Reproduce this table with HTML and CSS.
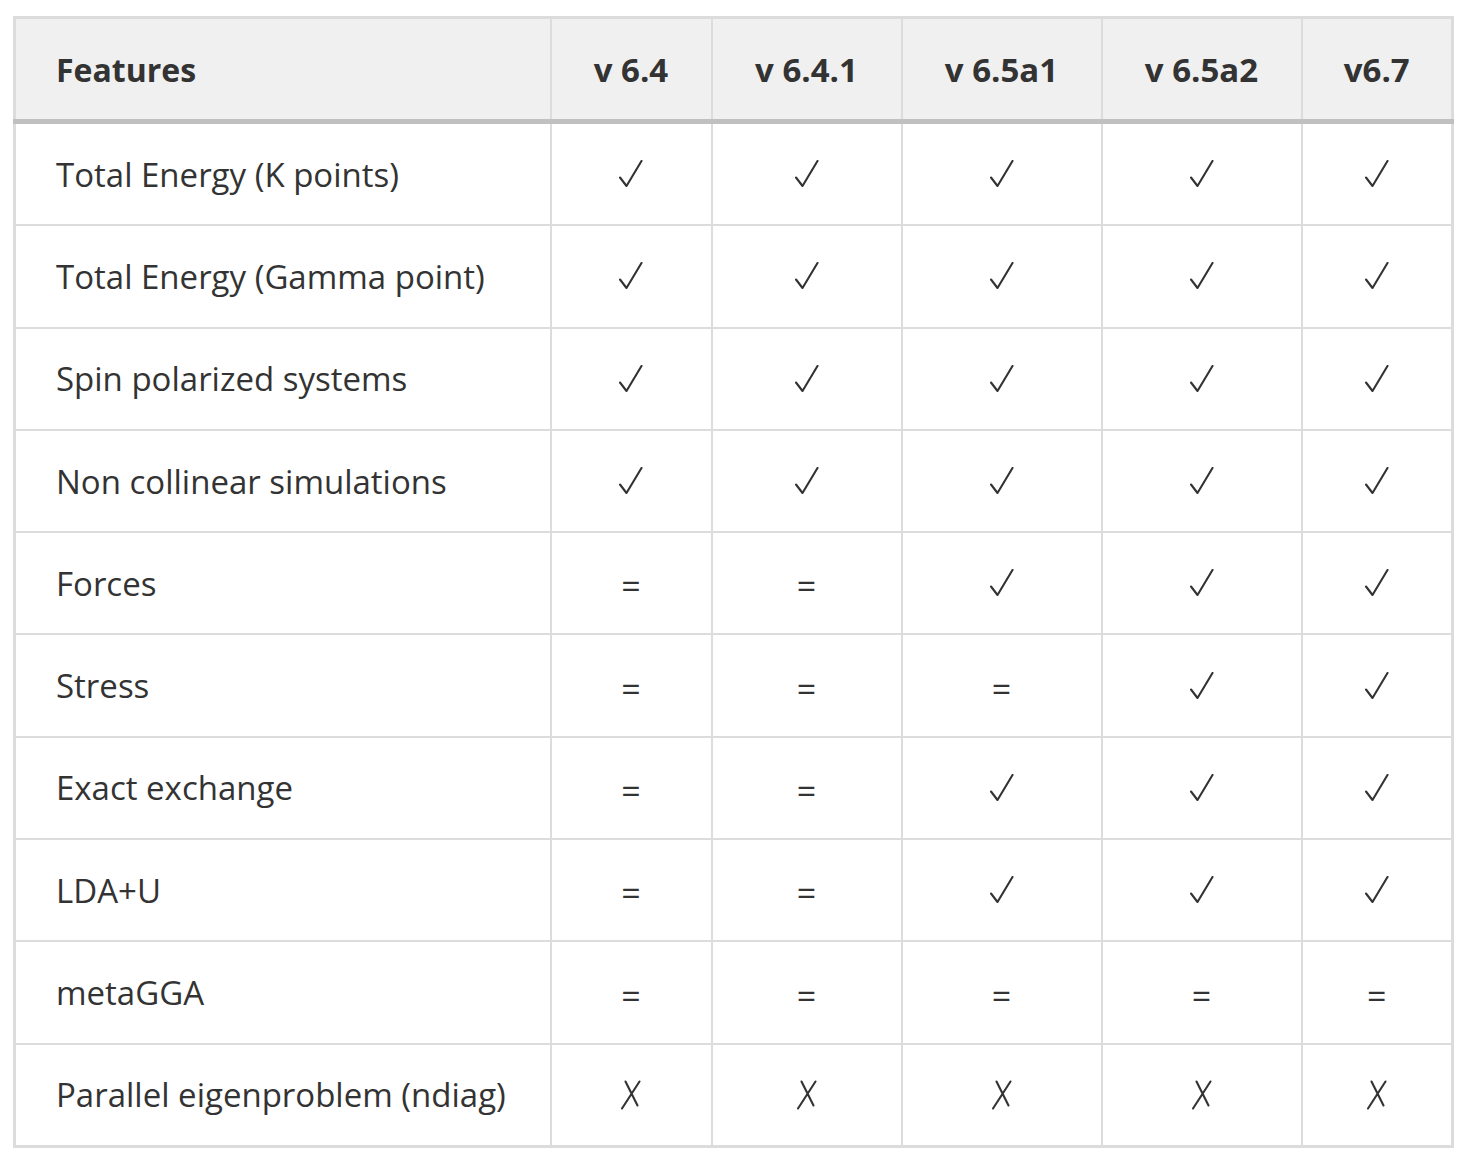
FILE: index.html
```html
<!DOCTYPE html>
<html>
<head>
<meta charset="utf-8">
<link rel="stylesheet" href="styles.css">
</head>
<body>
<svg width="0" height="0" class="defs">
  <defs>
    <symbol id="chk" viewBox="0 0 24 28">
      <polyline points="1,17.5 7.5,26 22.5,1" fill="none" stroke="#333" stroke-width="2.1" stroke-linecap="round" stroke-linejoin="round"/>
    </symbol>
    <symbol id="crs" viewBox="0 0 22 30">
      <path d="M5.5 1.5 L17.5 25.5 M19.5 1.5 L2 28.5" fill="none" stroke="#333" stroke-width="2.1" stroke-linecap="round"/>
    </symbol>
  </defs>
</svg>
<div class="wrap">
<table class="feat">
  <colgroup>
    <col class="c1"><col class="c2"><col class="c3"><col class="c4"><col class="c5"><col class="c6">
  </colgroup>
  <thead>
    <tr>
      <th class="name">Features</th>
      <th>v 6.4</th>
      <th>v 6.4.1</th>
      <th>v 6.5a1</th>
      <th>v 6.5a2</th>
      <th>v6.7</th>
    </tr>
  </thead>
  <tbody>
    <tr><td class="name">Total Energy (K points)</td>
      <td><svg class="ck"><use href="#chk"/></svg></td><td><svg class="ck"><use href="#chk"/></svg></td><td><svg class="ck"><use href="#chk"/></svg></td><td><svg class="ck"><use href="#chk"/></svg></td><td><svg class="ck"><use href="#chk"/></svg></td></tr>
    <tr><td class="name">Total Energy (Gamma point)</td>
      <td><svg class="ck"><use href="#chk"/></svg></td><td><svg class="ck"><use href="#chk"/></svg></td><td><svg class="ck"><use href="#chk"/></svg></td><td><svg class="ck"><use href="#chk"/></svg></td><td><svg class="ck"><use href="#chk"/></svg></td></tr>
    <tr><td class="name">Spin polarized systems</td>
      <td><svg class="ck"><use href="#chk"/></svg></td><td><svg class="ck"><use href="#chk"/></svg></td><td><svg class="ck"><use href="#chk"/></svg></td><td><svg class="ck"><use href="#chk"/></svg></td><td><svg class="ck"><use href="#chk"/></svg></td></tr>
    <tr><td class="name">Non collinear simulations</td>
      <td><svg class="ck"><use href="#chk"/></svg></td><td><svg class="ck"><use href="#chk"/></svg></td><td><svg class="ck"><use href="#chk"/></svg></td><td><svg class="ck"><use href="#chk"/></svg></td><td><svg class="ck"><use href="#chk"/></svg></td></tr>
    <tr><td class="name">Forces</td>
      <td class="eq">=</td><td class="eq">=</td><td><svg class="ck"><use href="#chk"/></svg></td><td><svg class="ck"><use href="#chk"/></svg></td><td><svg class="ck"><use href="#chk"/></svg></td></tr>
    <tr><td class="name">Stress</td>
      <td class="eq">=</td><td class="eq">=</td><td class="eq">=</td><td><svg class="ck"><use href="#chk"/></svg></td><td><svg class="ck"><use href="#chk"/></svg></td></tr>
    <tr><td class="name">Exact exchange</td>
      <td class="eq">=</td><td class="eq">=</td><td><svg class="ck"><use href="#chk"/></svg></td><td><svg class="ck"><use href="#chk"/></svg></td><td><svg class="ck"><use href="#chk"/></svg></td></tr>
    <tr><td class="name">LDA+U</td>
      <td class="eq">=</td><td class="eq">=</td><td><svg class="ck"><use href="#chk"/></svg></td><td><svg class="ck"><use href="#chk"/></svg></td><td><svg class="ck"><use href="#chk"/></svg></td></tr>
    <tr><td class="name">metaGGA</td>
      <td class="eq">=</td><td class="eq">=</td><td class="eq">=</td><td class="eq">=</td><td class="eq">=</td></tr>
    <tr><td class="name">Parallel eigenproblem (ndiag)</td>
      <td><svg class="cx"><use href="#crs"/></svg></td><td><svg class="cx"><use href="#crs"/></svg></td><td><svg class="cx"><use href="#crs"/></svg></td><td><svg class="cx"><use href="#crs"/></svg></td><td><svg class="cx"><use href="#crs"/></svg></td></tr>
  </tbody>
</table>
</div>
</body>
</html>
```
FILE: styles.css
```css
html, body {
  margin: 0;
  padding: 0;
  background: #fff;
}
.defs {
  position: absolute;
  width: 0;
  height: 0;
}
.wrap {
  padding: 16px 0 0 13px;
}
.feat {
  border-collapse: collapse;
  table-layout: fixed;
  width: 1441px;
  border: 3px solid #dcdcdc;
  font-family: "Open Sans", "Noto Sans", sans-serif;
  color: #333;
  font-size: 33px;
}
.c1 { width: 536px; }
.c2 { width: 161px; }
.c3 { width: 190px; }
.c4 { width: 200px; }
.c5 { width: 200px; }
.c6 { width: 151px; }
.feat th, .feat td {
  border: 2px solid #dcdcdc;
  text-align: center;
  vertical-align: middle;
  padding: 0;
}
.feat thead th {
  background: #f0f0f0;
  height: 100px;
  font-weight: 700;
  font-size: 33px;
  border-bottom: 5px solid #c0c0c0;
}
.feat thead th.name {
  font-size: 32px;
}
.feat tbody td {
  height: 100.3px;
}
.feat .name {
  text-align: left;
  padding-left: 40px;
}
.ck {
  display: block;
  margin: 0 auto;
  width: 24px;
  height: 28px;
}
.cx {
  display: block;
  margin: 0 auto;
  width: 22px;
  height: 30px;
}
.feat tbody td.eq {
  font-size: 34px;
  padding-top: 6px;
  height: 94.3px;
}
```
